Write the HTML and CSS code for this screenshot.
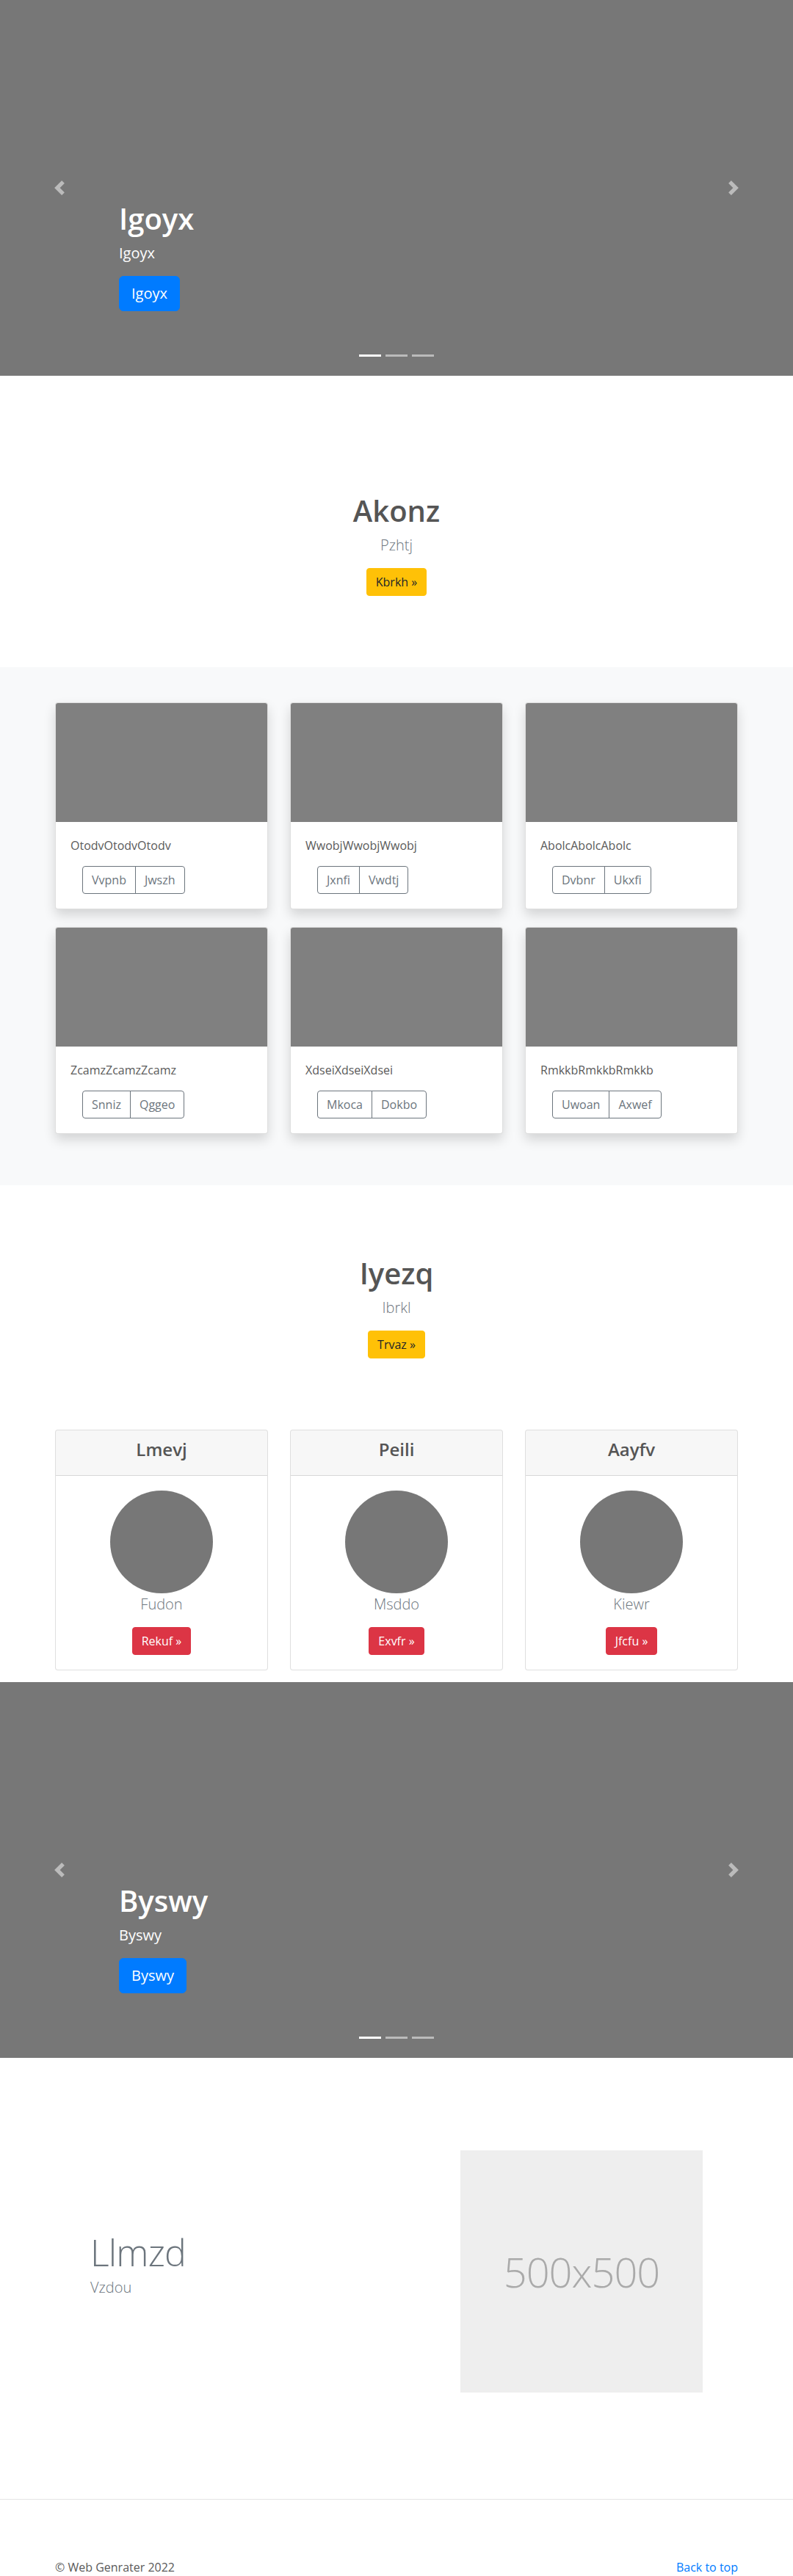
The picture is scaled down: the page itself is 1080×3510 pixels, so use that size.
FILE: index.html
```html
<!DOCTYPE html>
<html lang="en">
<head>
<meta charset="utf-8">
<title>Web Genrater</title>
<link rel="stylesheet" href="styles.css">
</head>
<body>

<div class="carousel">
  <div class="caption">
    <h1 class="caption-title">Igoyx</h1>
    <p class="caption-lead">Igoyx</p>
    <p class="caption-action"><a class="btn btn-lg btn-primary" href="#">Igoyx</a></p>
  </div>
  <ol class="indicators"><li class="active"></li><li></li><li></li></ol>
  <a class="control control-prev" href="#"><svg viewBox="0 0 8 8"><path d="M5.25 0l-4 4 4 4 1.5-1.5-2.5-2.5 2.5-2.5-1.5-1.5z"/></svg></a>
  <a class="control control-next" href="#"><svg viewBox="0 0 8 8"><path d="M2.75 0l-1.5 1.5 2.5 2.5-2.5 2.5 1.5 1.5 4-4-4-4z"/></svg></a>
</div>

<section class="intro">
  <h1 class="intro-title">Akonz</h1>
  <p class="intro-lead">Pzhtj</p>
  <p class="intro-action"><a class="btn btn-warning" href="#">Kbrkh &raquo;</a></p>
</section>

<section class="album">
  <div class="container card-grid">
    <div class="card">
      <div class="card-img"></div>
      <div class="card-body">
        <p class="card-text">OtodvOtodvOtodv</p>
        <div class="card-actions"><div class="btn-group"><a class="btn btn-outline" href="#">Vvpnb</a><a class="btn btn-outline" href="#">Jwszh</a></div></div>
      </div>
    </div>
    <div class="card">
      <div class="card-img"></div>
      <div class="card-body">
        <p class="card-text">WwobjWwobjWwobj</p>
        <div class="card-actions"><div class="btn-group"><a class="btn btn-outline" href="#">Jxnfi</a><a class="btn btn-outline" href="#">Vwdtj</a></div></div>
      </div>
    </div>
    <div class="card">
      <div class="card-img"></div>
      <div class="card-body">
        <p class="card-text">AbolcAbolcAbolc</p>
        <div class="card-actions"><div class="btn-group"><a class="btn btn-outline" href="#">Dvbnr</a><a class="btn btn-outline" href="#">Ukxfi</a></div></div>
      </div>
    </div>
    <div class="card">
      <div class="card-img"></div>
      <div class="card-body">
        <p class="card-text">ZcamzZcamzZcamz</p>
        <div class="card-actions"><div class="btn-group"><a class="btn btn-outline" href="#">Snniz</a><a class="btn btn-outline" href="#">Qggeo</a></div></div>
      </div>
    </div>
    <div class="card">
      <div class="card-img"></div>
      <div class="card-body">
        <p class="card-text">XdseiXdseiXdsei</p>
        <div class="card-actions"><div class="btn-group"><a class="btn btn-outline" href="#">Mkoca</a><a class="btn btn-outline" href="#">Dokbo</a></div></div>
      </div>
    </div>
    <div class="card">
      <div class="card-img"></div>
      <div class="card-body">
        <p class="card-text">RmkkbRmkkbRmkkb</p>
        <div class="card-actions"><div class="btn-group"><a class="btn btn-outline" href="#">Uwoan</a><a class="btn btn-outline" href="#">Axwef</a></div></div>
      </div>
    </div>
  </div>
</section>

<section class="intro">
  <h1 class="intro-title">Iyezq</h1>
  <p class="intro-lead">Ibrkl</p>
  <p class="intro-action"><a class="btn btn-warning" href="#">Trvaz &raquo;</a></p>
</section>

<section class="container pricing-grid">
  <div class="price-card">
    <div class="price-header"><h4 class="price-title">Lmevj</h4></div>
    <div class="price-body">
      <div class="avatar"></div>
      <p class="price-name">Fudon</p>
      <p class="price-action"><a class="btn btn-danger" href="#">Rekuf &raquo;</a></p>
    </div>
  </div>
  <div class="price-card">
    <div class="price-header"><h4 class="price-title">Peili</h4></div>
    <div class="price-body">
      <div class="avatar"></div>
      <p class="price-name">Msddo</p>
      <p class="price-action"><a class="btn btn-danger" href="#">Exvfr &raquo;</a></p>
    </div>
  </div>
  <div class="price-card">
    <div class="price-header"><h4 class="price-title">Aayfv</h4></div>
    <div class="price-body">
      <div class="avatar"></div>
      <p class="price-name">Kiewr</p>
      <p class="price-action"><a class="btn btn-danger" href="#">Jfcfu &raquo;</a></p>
    </div>
  </div>
</section>

<div class="carousel">
  <div class="caption">
    <h1 class="caption-title">Byswy</h1>
    <p class="caption-lead">Byswy</p>
    <p class="caption-action"><a class="btn btn-lg btn-primary" href="#">Byswy</a></p>
  </div>
  <ol class="indicators"><li class="active"></li><li></li><li></li></ol>
  <a class="control control-prev" href="#"><svg viewBox="0 0 8 8"><path d="M5.25 0l-4 4 4 4 1.5-1.5-2.5-2.5 2.5-2.5-1.5-1.5z"/></svg></a>
  <a class="control control-next" href="#"><svg viewBox="0 0 8 8"><path d="M2.75 0l-1.5 1.5 2.5 2.5-2.5 2.5 1.5 1.5 4-4-4-4z"/></svg></a>
</div>

<section class="container featurette">
  <div class="featurette-text">
    <h2 class="featurette-heading">Llmzd</h2>
    <p class="featurette-lead">Vzdou</p>
  </div>
  <div class="placeholder">500x500</div>
</section>

<hr class="divider">

<footer class="container footer">
  <p>&copy; Web Genrater 2022</p>
  <p><a class="footer-link" href="#">Back to top</a></p>
</footer>

</body>
</html>
```

FILE: styles.css
```css
* { box-sizing: border-box; }

body {
  margin: 0;
  font-family: "Open Sans", "Noto Sans", "Liberation Sans", sans-serif;
  font-size: 16px;
  line-height: 1.5;
  color: #5a5a5a;
  background: #fff;
}

p { margin: 0; }

.container {
  width: 930px;
  margin-left: auto;
  margin-right: auto;
}

/* Buttons */
.btn {
  display: inline-block;
  padding: 6px 12px;
  font-size: 16px;
  line-height: 24px;
  border: 1px solid transparent;
  border-radius: 4px;
  text-decoration: none;
  white-space: nowrap;
}
.btn-lg {
  padding: 8px 16px;
  font-size: 20px;
  line-height: 30px;
  border-radius: 6px;
}
.btn-primary { background: #007bff; border-color: #007bff; color: #fff; }
.btn-warning { background: #ffc107; border-color: #ffc107; color: #212529; }
.btn-danger { background: #dc3545; border-color: #dc3545; color: #fff; }
.btn-outline { background: transparent; border-color: #6c757d; color: #6c757d; }

/* Carousel */
.carousel {
  position: relative;
  height: 512px;
  background: #777;
  margin-bottom: 64px;
  display: flex;
  flex-direction: column;
  justify-content: flex-end;
}
.caption {
  padding: 0 162px 88px;
  color: #fff;
}
.caption-title {
  margin: 0 0 8px;
  font-size: 40px;
  font-weight: 600;
  line-height: 1.2;
}
.caption-lead {
  margin-bottom: 16px;
  font-size: 20px;
  line-height: 30px;
}
.caption-action { display: flex; }

.indicators {
  position: absolute;
  left: 0;
  right: 0;
  bottom: 26px;
  display: flex;
  justify-content: center;
  gap: 6px;
  margin: 0;
  padding: 0;
  list-style: none;
}
.indicators li {
  width: 30px;
  height: 3px;
  background: rgba(255, 255, 255, 0.5);
}
.indicators li.active { background: #fff; }

.control {
  position: absolute;
  top: 0;
  bottom: 0;
  width: 162px;
  display: flex;
  align-items: center;
  justify-content: center;
  opacity: 0.5;
}
.control-prev { left: 0; }
.control-next { right: 0; }
.control svg {
  width: 20px;
  height: 20px;
  fill: #fff;
}

/* Intro (jumbotron) */
.intro {
  padding: 96px 0 97px;
  text-align: center;
}
.intro-title {
  margin: 0 0 8px;
  font-size: 40px;
  font-weight: 600;
  line-height: 1.2;
  color: #555;
}
.intro-lead {
  margin-bottom: 16px;
  font-size: 20px;
  font-weight: 300;
  line-height: 30px;
  color: #6c757d;
}
.intro-action {
  display: flex;
  justify-content: center;
}

/* Album */
.album {
  background: #f8f9fa;
  padding: 48px 0 70px;
}
.card-grid {
  display: grid;
  grid-template-columns: repeat(3, 1fr);
  column-gap: 30px;
  row-gap: 24px;
}
.card {
  background: #fff;
  border: 1px solid rgba(0, 0, 0, 0.125);
  border-radius: 4px;
  box-shadow: 0 8px 16px rgba(0, 0, 0, 0.15);
  overflow: hidden;
}
.card-img {
  height: 162px;
  background: #808080;
}
.card-body { padding: 20px; }
.card-text {
  margin-bottom: 16px;
  color: #5a5a5a;
}
.card-actions { display: flex; }
.btn-group {
  display: inline-flex;
  margin-left: 16px;
}
.btn-group .btn:first-child { border-radius: 4px 0 0 4px; }
.btn-group .btn + .btn {
  margin-left: -1px;
  border-radius: 0 4px 4px 0;
}

/* Pricing */
.pricing-grid {
  display: grid;
  grid-template-columns: repeat(3, 1fr);
  column-gap: 30px;
  margin-bottom: 16px;
}
.price-card {
  border: 1px solid rgba(0, 0, 0, 0.125);
  border-radius: 4px;
  background: #fff;
  text-align: center;
  overflow: hidden;
}
.price-header {
  padding: 12px 20px;
  background: rgba(0, 0, 0, 0.03);
  border-bottom: 1px solid rgba(0, 0, 0, 0.125);
}
.price-title {
  margin: 0 0 8px;
  font-size: 24px;
  font-weight: 600;
  line-height: 1.2;
  color: #555;
}
.price-body { padding: 20px; }
.avatar {
  width: 140px;
  height: 140px;
  border-radius: 50%;
  background: #777;
  margin: 0 auto;
}
.price-name {
  margin-bottom: 16px;
  font-size: 20px;
  font-weight: 300;
  line-height: 30px;
  color: #6c757d;
}
.price-action {
  display: flex;
  justify-content: center;
}

/* Featurette */
.featurette {
  display: flex;
  align-items: center;
}
.featurette-text {
  flex: 1;
  padding-left: 48px;
}
.featurette-heading {
  margin: 0 0 8px;
  font-size: 50px;
  font-weight: 300;
  line-height: 1;
  letter-spacing: -0.8px;
  color: #6c757d;
}
.featurette-lead {
  margin-bottom: 16px;
  font-size: 20px;
  font-weight: 300;
  line-height: 30px;
  color: #6c757d;
}
.placeholder {
  flex: none;
  width: 330px;
  height: 330px;
  margin: 62px 48px 65px 0;
  background: #eee;
  color: #aaa;
  display: flex;
  align-items: center;
  justify-content: center;
  font-size: 56px;
  font-weight: 300;
  letter-spacing: -1px;
}

/* Footer */
.divider {
  margin: 80px 0 0;
  border: 0;
  border-top: 1px solid rgba(0, 0, 0, 0.1);
  height: 0;
}
.footer {
  display: flex;
  justify-content: space-between;
  padding-top: 80px;
}
.footer-link {
  color: #007bff;
  text-decoration: none;
}
```
